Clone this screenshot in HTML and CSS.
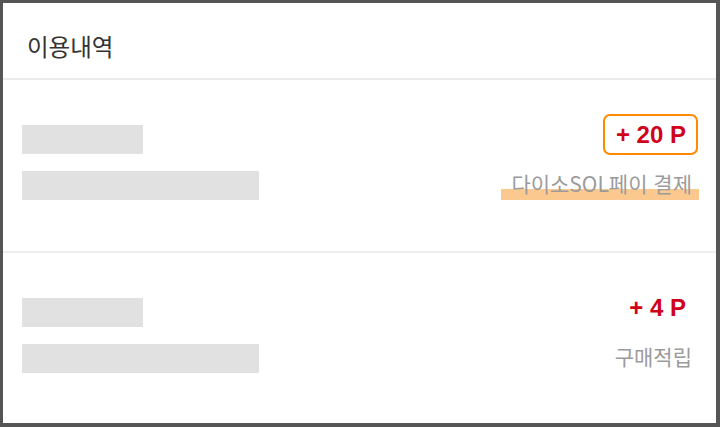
FILE: index.html
```html
<!DOCTYPE html>
<html lang="ko">
  <head>
    <meta charset="UTF-8" />
    <meta name="viewport" content="width=device-width, initial-scale=1.0" />
    <title>이용내역</title>
    <link rel="stylesheet" href="styles.css">
  </head>
  <body>
    <div class="frame">
      <h1 class="title">이용내역</h1>

      <div class="item">
        <div class="skeleton">
          <div class="bar bar-short"></div>
          <div class="bar bar-long"></div>
        </div>
        <div class="info">
          <div class="row"><span class="point boxed">+ 20 P</span></div>
          <div class="row"><span class="label marked">다이소SOL페이 결제</span></div>
        </div>
      </div>

      <div class="item">
        <div class="skeleton">
          <div class="bar bar-short"></div>
          <div class="bar bar-long"></div>
        </div>
        <div class="info">
          <div class="row"><span class="point">+ 4 P</span></div>
          <div class="row"><span class="label">구매적립</span></div>
        </div>
      </div>
    </div>
  </body>
</html>
```

FILE: styles.css
```css
* {
  box-sizing: border-box;
}

html,
body {
  margin: 0;
  padding: 0;
  height: 100%;
}

body {
  font-family: "Noto Sans CJK KR", "Noto Sans", sans-serif;
  background-color: #555;
}

.frame {
  height: 427px;
  background-color: #ffffff;
  border: 3px solid #555;
  border-right-width: 4px;
  border-bottom-width: 4px;
  display: flex;
  flex-direction: column;
}

.title {
  margin: 0;
  height: 77px;
  padding: 31px 0 0 24px;
  font-size: 23.5px;
  line-height: 24px;
  font-weight: 400;
  color: #333;
  border-bottom: 2px solid #ebebeb;
}

.item {
  display: flex;
  justify-content: space-between;
  padding: 45px 24px 0 19px;
  height: 173px;
  border-bottom: 2px solid #eeeeee;
}

.item:last-child {
  border-bottom: none;
  flex: 1;
}

.skeleton {
  display: flex;
  flex-direction: column;
  gap: 17px;
}

.bar {
  height: 29px;
  background-color: #e1e1e1;
}

.bar-short {
  width: 121px;
}

.bar-long {
  width: 237px;
}

.info {
  display: flex;
  flex-direction: column;
  align-items: flex-end;
  gap: 17px;
}

.row {
  height: 29px;
  display: flex;
  align-items: center;
}

.point {
  position: relative;
  margin-right: 6px;
  margin-top: -10px;
  font-family: "Liberation Sans", Arial, sans-serif;
  font-weight: 700;
  font-size: 24px;
  color: #d0021b;
}

/* annotation box around the first amount */
.boxed::after {
  content: "";
  position: absolute;
  left: -13px;
  right: -12px;
  top: -7px;
  bottom: -6px;
  border: 2.5px solid #ff8a00;
  border-radius: 7px;
}

.label {
  position: relative;
  font-size: 21px;
  color: #9b9b9b;
  margin-top: -6px;
}

/* highlighter stroke under the label */
.marked::before {
  content: "";
  position: absolute;
  left: -10px;
  right: -7px;
  bottom: -2px;
  height: 11px;
  background-color: #fbc98f;
  z-index: -1;
}

.marked {
  z-index: 0;
}
```
